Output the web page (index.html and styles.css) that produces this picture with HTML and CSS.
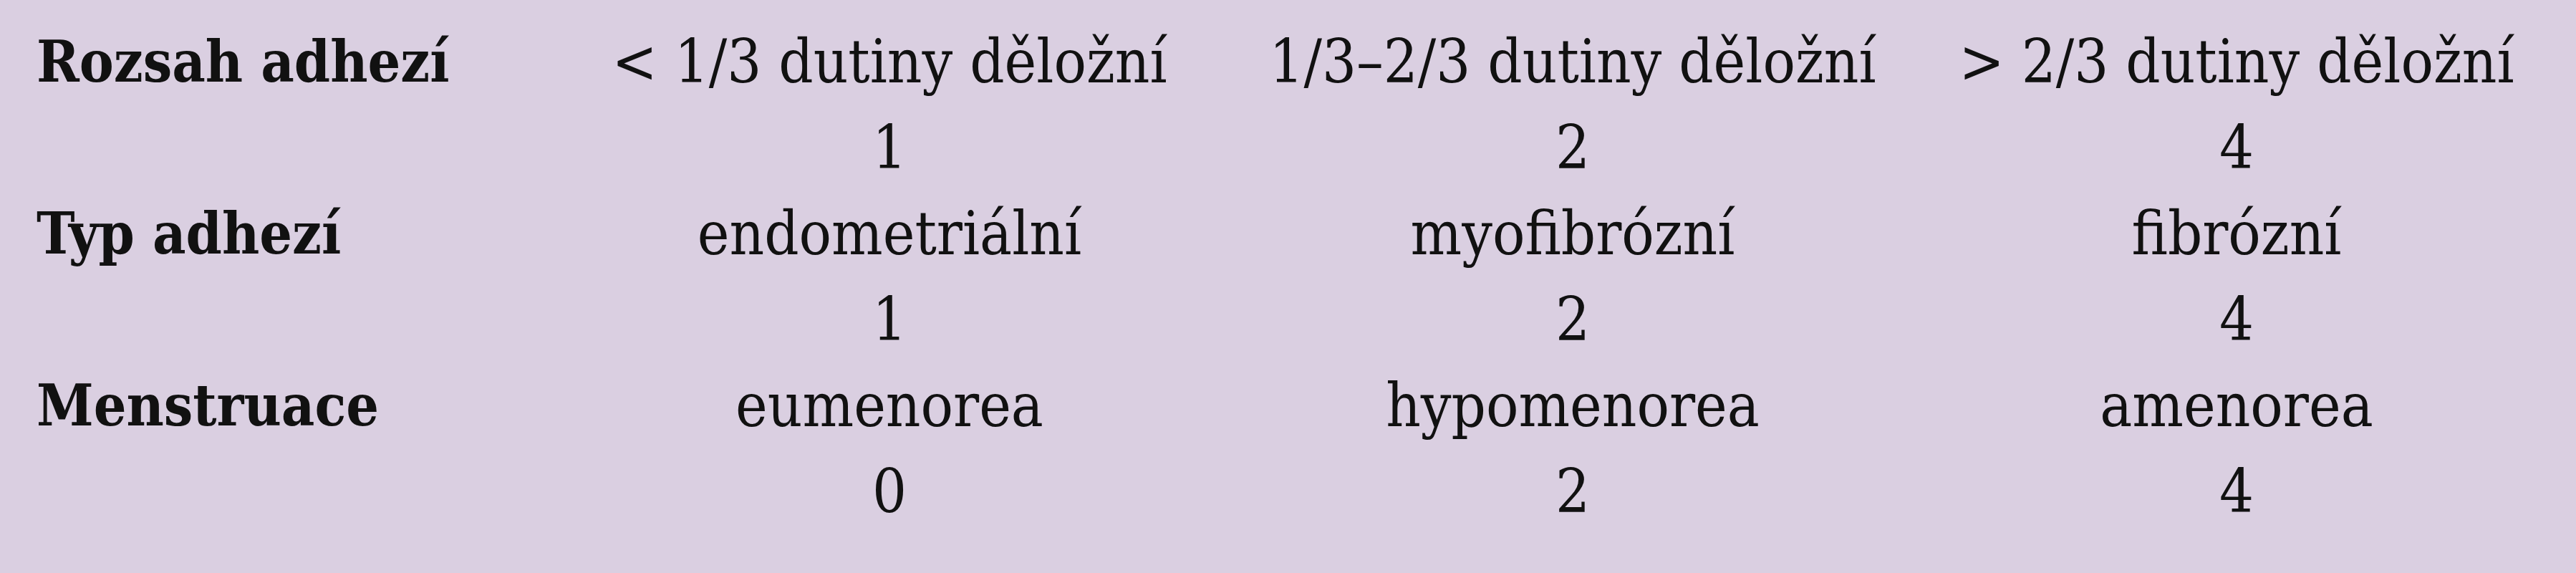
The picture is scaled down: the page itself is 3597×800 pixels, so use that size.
FILE: index.html
```html
<!DOCTYPE html>
<html lang="cs">
<head>
<meta charset="utf-8">
<title>Skóre adhezí</title>
<link rel="stylesheet" href="styles.css">
</head>
<body>
<div class="scale">
  <div class="label">Rozsah adhezí</div>
  <div class="val">&lt; 1/3 dutiny děložní</div>
  <div class="val">1/3–2/3 dutiny děložní</div>
  <div class="val">&gt; 2/3 dutiny děložní</div>

  <div class="label"></div>
  <div class="val">1</div>
  <div class="val">2</div>
  <div class="val">4</div>

  <div class="label">Typ adhezí</div>
  <div class="val">endometriální</div>
  <div class="val">myofibrózní</div>
  <div class="val">fibrózní</div>

  <div class="label"></div>
  <div class="val">1</div>
  <div class="val">2</div>
  <div class="val">4</div>

  <div class="label">Menstruace</div>
  <div class="val">eumenorea</div>
  <div class="val">hypomenorea</div>
  <div class="val">amenorea</div>

  <div class="label"></div>
  <div class="val">0</div>
  <div class="val">2</div>
  <div class="val">4</div>
</div>
</body>
</html>
```
FILE: styles.css
```css
html, body {
  margin: 0;
  padding: 0;
  background: #dacfe1;
}

body {
  width: 3597px;
  height: 800px;
  overflow: hidden;
}

.scale {
  display: grid;
  grid-template-columns: 714px 954px 954px 900px;
  grid-auto-rows: 120px;
  padding: 26px 0 0 51px;
  font-family: "DejaVu Serif", "Liberation Serif", serif;
  font-stretch: condensed;
  font-size: 84px;
  line-height: 120px;
  color: #111;
}

.label {
  font-weight: bold;
  font-size: 80px;
  white-space: nowrap;
}

.val {
  text-align: center;
  white-space: nowrap;
}
```
